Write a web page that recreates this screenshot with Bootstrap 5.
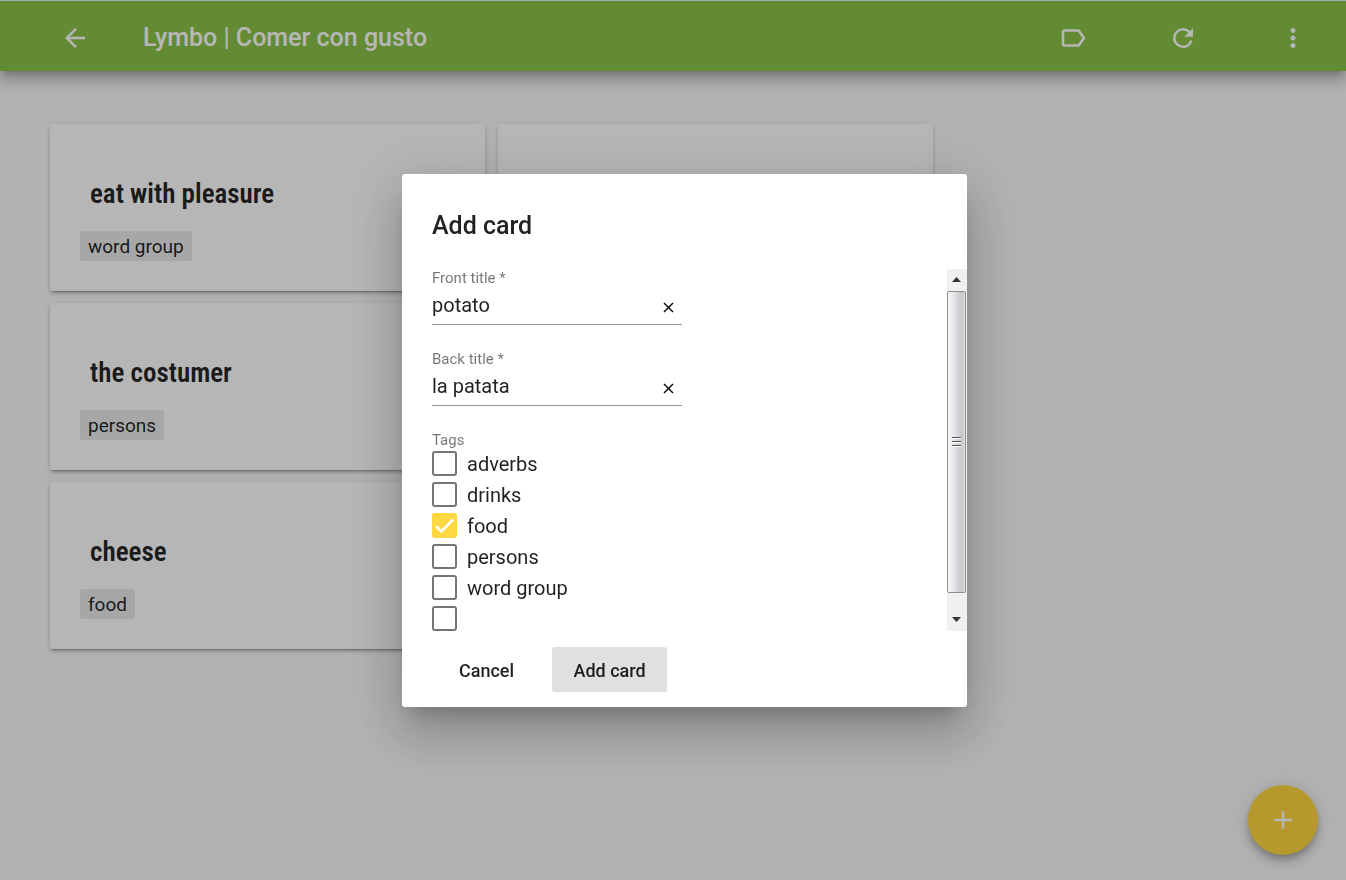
<!DOCTYPE html>
<html lang="en">
<head>
<meta charset="utf-8">
<meta name="viewport" content="width=device-width, initial-scale=1">
<title>Lymbo</title>
<link rel="stylesheet" href="https://cdn.jsdelivr.net/npm/bootstrap@5.3.0/dist/css/bootstrap.min.css">
<style>
  body { font-family: Roboto, "Liberation Sans", sans-serif; background: #fafafa; color: rgba(0,0,0,.87); min-height: 100vh; line-height: 24px; }
  svg { display: block; fill: currentColor; }
  button { color: inherit; }
  .top-bar { height: 71px; background: #8bc34a; color: #fff; border-top: 1px solid #e2f2ff; padding: 4px 38px 0 60px;
    box-shadow: 0 6px 6px -4px rgba(0,0,0,.2), 0 10px 12px 1px rgba(0,0,0,.14), 0 4px 18px 3px rgba(0,0,0,.12); }
  .top-title { font-size: 25px; font-weight: 500; line-height: 30px; margin-left: 53px; }
  .top-actions { gap: 80px; }
  .deck { padding: 53px 50px; gap: 13px; }
  .deck-col { width: 435px; gap: 12px; }
  .word-card { border: 0; border-radius: 3px; min-height: 167px; padding: 54px 30px 30px;
    box-shadow: 0 4px 1px -3px rgba(0,0,0,.2), 0 3px 3px 0 rgba(0,0,0,.14), 0 1px 6px 0 rgba(0,0,0,.12); }
  .word-title { font-family: "Roboto Condensed", Roboto, sans-serif; font-size: 27px; font-weight: 600; line-height: 32px; margin: 0 10px 21px; }
  .tag { background: #ebebeb; border-radius: 3px; font-size: 19px; line-height: 30px; padding: 1px 8px 0; height: 30px; }
  .fab { width: 70px; height: 70px; right: 28px; bottom: 25px; background: #ffd740; color: #fff;
    box-shadow: 0 4px 6px -1px rgba(0,0,0,.2), 0 8px 12px 0 rgba(0,0,0,.14), 0 1px 22px 0 rgba(0,0,0,.12); }
  .scrim { background: rgba(0,0,0,.288); padding-left: 23px; }
  .add-dialog { width: 565px; max-width: none; margin: 0 auto; }
  .add-dialog .modal-content { border: 0; border-radius: 3px; color: rgba(0,0,0,.87); padding: 37px 0 15px 30px;
    box-shadow: 0 14px 19px -9px rgba(0,0,0,.2), 0 30px 48px 4px rgba(0,0,0,.14), 0 11px 58px 10px rgba(0,0,0,.12); }
  .add-dialog .modal-title { font-size: 25px; font-weight: 500; line-height: 30px; margin-bottom: 28px; }
  .pane { height: 362px; }
  .field { width: 250px; margin-bottom: 25px; }
  .hint { font-size: 15px; line-height: 17px; padding-top: 1px; color: rgba(0,0,0,.54); display: block; }
  .tags-hint { margin-bottom: 2px; }
  .field-line { height: 38px; border-bottom: 1px solid #949494; }
  .field-line input { border: 0; outline: 0; background: none; padding: 0; font-size: 20px; line-height: 24px; height: 36px; color: inherit; min-width: 0; }
  .clear { padding: 5px 8px 0; }
  .tick-row { height: 25px; margin-bottom: 6px; gap: 10px; font-size: 20px; }
  .tick-row label { padding-top: 1px; }
  .tick-row .form-check-input { width: 25px; height: 25px; margin: 0; border: 2px solid #757575; border-radius: 3px; flex: none; }
  .tick-row .form-check-input:checked { background-color: #ffd740; border-color: #ffd740; background-size: 25px 25px; background-position: center;
    background-image: url("data:image/svg+xml,%3csvg xmlns='http://www.w3.org/2000/svg' viewBox='0 0 24 24'%3e%3cpath fill='none' stroke='%23fff' stroke-width='2.6' d='M4 12.7l5 5L20.3 6.3'/%3e%3c/svg%3e"); }
  .rail { width: 20px; background: #f0f0f0; }
  .rail-end { height: 22px; color: #333; padding-right: 2px; }
  .thumb { height: 302px; width: 19px; border: 1px solid #8f8f8f; border-radius: 2px; gap: 2px;
    background: linear-gradient(90deg, #f6f6f7, #e6e6ea 35%, #d2d2d7 60%, #c6c6cb 85%, #e4e4e6); }
  .grip { width: 9px; height: 2px; background: linear-gradient(#555 50%, #fff 50%); }
  .act { height: 45px; border: 0; border-radius: 3px; font-size: 18px; font-weight: 500; padding: 3px 22px 0; background: none; }
  .act-main { width: 115px; background: #e0e0e0; padding: 3px 0 0; }
  .acts { margin-top: 16px; padding-left: 5px; gap: 16px; }
</style>
</head>
<body>
<header class="top-bar d-flex align-items-center">
  <button class="btn p-0 border-0 text-reset" aria-label="Back"><svg width="30" height="30" viewBox="0 0 24 24"><path d="M20 11H7.83l5.59-5.59L12 4l-8 8 8 8 1.41-1.41L7.83 13H20v-2z"/></svg></button>
  <h1 class="top-title mb-0">Lymbo | Comer con gusto</h1>
  <div class="top-actions d-flex ms-auto">
    <button class="btn p-0 border-0 text-reset" aria-label="Tags"><svg width="30" height="30" viewBox="0 0 24 24"><path d="M17.63 5.84C17.27 5.33 16.67 5 16 5L5 5.01C3.9 5.01 3 5.9 3 7v10c0 1.1.9 1.99 2 1.99L16 19c.67 0 1.27-.33 1.63-.84L22 12l-4.37-6.16zM16 17H5V7h11l3.55 5L16 17z"/></svg></button>
    <button class="btn p-0 border-0 text-reset" aria-label="Refresh"><svg width="30" height="30" viewBox="0 0 24 24"><path d="M17.65 6.35A7.958 7.958 0 0 0 12 4a8 8 0 1 0 7.73 10h-2.08A5.99 5.99 0 0 1 12 18a6 6 0 1 1 0-12c1.66 0 3.14.69 4.22 1.78L13 11h7V4l-2.35 2.35z"/></svg></button>
    <button class="btn p-0 border-0 text-reset" aria-label="More"><svg width="30" height="30" viewBox="0 0 24 24"><path d="M12 8c1.1 0 2-.9 2-2s-.9-2-2-2-2 .9-2 2 .9 2 2 2zm0 2c-1.1 0-2 .9-2 2s.9 2 2 2 2-.9 2-2-.9-2-2-2zm0 6c-1.1 0-2 .9-2 2s.9 2 2 2 2-.9 2-2-.9-2-2-2z"/></svg></button>
  </div>
</header>

<main class="deck d-flex align-items-start">
  <div class="deck-col d-flex flex-column">
    <article class="card word-card align-items-start"><h2 class="word-title">eat with pleasure</h2><span class="tag">word group</span></article>
    <article class="card word-card align-items-start"><h2 class="word-title">the costumer</h2><span class="tag">persons</span></article>
    <article class="card word-card align-items-start"><h2 class="word-title">cheese</h2><span class="tag">food</span></article>
  </div>
  <div class="deck-col d-flex flex-column">
    <article class="card word-card"></article>
  </div>
</main>

<button class="fab btn rounded-circle border-0 position-fixed p-0 d-flex align-items-center justify-content-center" aria-label="Add"><svg width="30" height="30" viewBox="0 0 24 24"><path d="M19 13h-6v6h-2v-6H5v-2h6V5h2v6h6v2z"/></svg></button>

<div class="modal d-flex align-items-center scrim" role="dialog" aria-labelledby="dialog-title">
  <form class="modal-dialog add-dialog">
    <div class="modal-content">
      <h2 class="modal-title" id="dialog-title">Add card</h2>
      <div class="pane d-flex justify-content-between">
        <div>
          <div class="field">
            <label class="hint" for="front">Front title *</label>
            <div class="field-line d-flex"><input class="flex-grow-1" id="front" type="text" value="potato"><button type="button" class="btn border-0 clear" aria-label="Clear front title"><svg width="11" height="11" viewBox="0 0 11 11"><path d="M1 1l9 9M10 1l-9 9" stroke="#000" stroke-width="1.4"/></svg></button></div>
          </div>
          <div class="field">
            <label class="hint" for="back">Back title *</label>
            <div class="field-line d-flex"><input class="flex-grow-1" id="back" type="text" value="la patata"><button type="button" class="btn border-0 clear" aria-label="Clear back title"><svg width="11" height="11" viewBox="0 0 11 11"><path d="M1 1l9 9M10 1l-9 9" stroke="#000" stroke-width="1.4"/></svg></button></div>
          </div>
          <span class="hint tags-hint">Tags</span>
          <div class="tick-row d-flex align-items-center"><input class="form-check-input" type="checkbox" id="t1"><label for="t1">adverbs</label></div>
          <div class="tick-row d-flex align-items-center"><input class="form-check-input" type="checkbox" id="t2"><label for="t2">drinks</label></div>
          <div class="tick-row d-flex align-items-center"><input class="form-check-input" type="checkbox" id="t3" checked><label for="t3">food</label></div>
          <div class="tick-row d-flex align-items-center"><input class="form-check-input" type="checkbox" id="t4"><label for="t4">persons</label></div>
          <div class="tick-row d-flex align-items-center"><input class="form-check-input" type="checkbox" id="t5"><label for="t5">word group</label></div>
          <div class="tick-row d-flex align-items-center"><input class="form-check-input" type="checkbox" id="t6" aria-label="New tag"></div>
        </div>
        <div class="rail d-flex flex-column" aria-hidden="true">
          <div class="rail-end d-flex align-items-center justify-content-center"><svg width="9" height="5" viewBox="0 0 9 5"><path d="M0 5l4.500-5L9 5z"/></svg></div>
          <div class="thumb d-flex flex-column align-items-center justify-content-center"><i class="grip"></i><i class="grip"></i><i class="grip"></i></div>
          <div class="rail-end mt-auto d-flex align-items-center justify-content-center"><svg width="9" height="5" viewBox="0 0 9 5"><path d="M0 0l4.500 5L9 0z"/></svg></div>
        </div>
      </div>
      <div class="acts d-flex">
        <button type="button" class="act">Cancel</button>
        <button type="submit" class="act act-main">Add card</button>
      </div>
    </div>
  </form>
</div>
<script src="https://cdn.jsdelivr.net/npm/bootstrap@5.3.0/dist/js/bootstrap.bundle.min.js"></script>
</body>
</html>
